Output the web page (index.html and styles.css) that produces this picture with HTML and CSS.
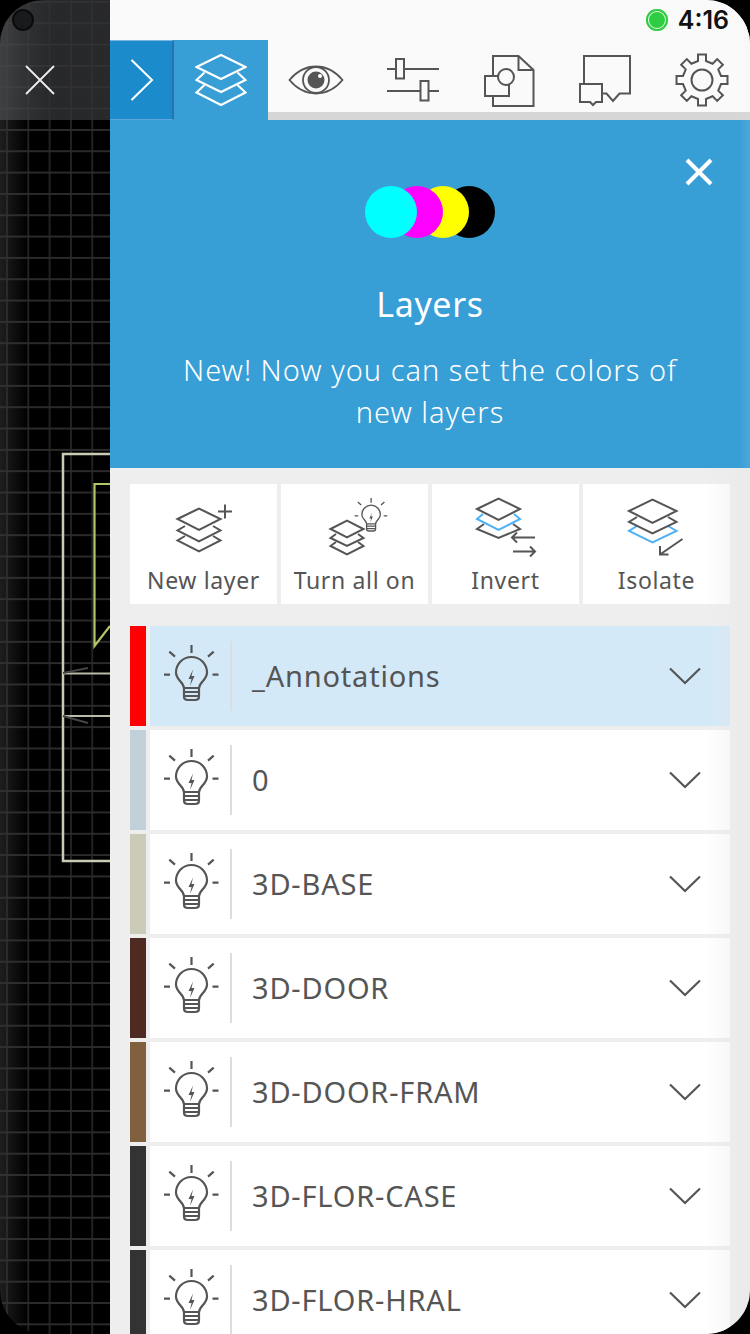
FILE: index.html
```html
<!DOCTYPE html>
<html lang="en">
<head>
<meta charset="utf-8">
<title>Layers</title>
<link rel="stylesheet" href="styles.css">
</head>
<body>
<svg class="defs" width="0" height="0" aria-hidden="true">
  <symbol id="bulb" viewBox="0 0 56 60">
    <g fill="none" stroke="#555" stroke-width="2.200">
      <path d="M28.500 0V8M6.300 6.700L12 11.700M50.700 6.700L45 11.700M1 29.700H7M49.500 29.700H55.500"/>
      <path d="M21 43C20.500 37 13 35 13 27.500A15.500 15.500 0 0 1 44 27.500C44 35 36.500 37 36 43"/>
      <path d="M21 43H36V51.500Q36 55 32 55H25Q21 55 21 51.500ZM21 47H36M21 51H36"/>
    </g>
    <path d="M30 24.500L25.500 34H28.500L27 41L31.500 31H28.500Z" fill="#555"/>
  </symbol>
  <symbol id="chevron" viewBox="0 0 34 18">
    <path d="M2 1.500L17 16L32 1.500" fill="none" stroke="#555" stroke-width="2.200"/>
  </symbol>
</svg>
<div class="device">
  <aside class="canvas">
    <div class="canvas-head">
      <span class="camera"></span>
      <svg class="canvas-close" viewBox="0 0 30 30" width="30" height="30"><path d="M1 1L29 29M29 1L1 29" stroke="#eee" stroke-width="1.800" fill="none"/></svg>
    </div>
    <svg class="drawing" viewBox="0 0 110 1334" width="110" height="1334">
      <path d="M110 454H63V861H110" fill="none" stroke="#c9cbb4" stroke-width="2.500"/>
      <path d="M63 673.500H110M63 716H110" fill="none" stroke="#b9baa8" stroke-width="1.800"/>
      <path d="M63 673L88 668M63 716L88 723" fill="none" stroke="#444" stroke-width="2.200"/>
      <path d="M110 484H94.500V646L110 626" fill="none" stroke="#b0c766" stroke-width="2.200"/>
    </svg>
  </aside>
  <main class="panel">
    <div class="status">
      <span class="dot"></span>
      <span class="time">4:16</span>
    </div>
    <nav class="tabs">
      <div class="tab-toggle">
        <svg viewBox="0 0 24 42" width="24" height="42"><path d="M1.500 1L22 21L1.500 41" fill="none" stroke="#fff" stroke-width="2"/></svg>
      </div>
      <div class="tab-active">
        <svg viewBox="194 53 52 54" width="52" height="54"><g fill="none" stroke="#fff" stroke-width="2.200"><path d="M195.500 67L220 55L244.500 67L220 79Z"/><path d="M203.500 72.500L195.500 80L220 92L244.500 80L236.500 72.500"/><path d="M203.500 85L195.500 92.500L220 105L244.500 92.500L236.500 85"/></g></svg>
      </div>
      <div class="tab">
        <svg viewBox="288 64 56 32" width="56" height="32"><path d="M289.500 80C297 71 306 66.500 316 66.500C326 66.500 335 71 342.500 80C335 89 326 93.500 316 93.500C306 93.500 297 89 289.500 80Z" fill="none" stroke="#555" stroke-width="1.800"/><circle cx="316" cy="80" r="13" fill="none" stroke="#555" stroke-width="1.800"/><circle cx="316" cy="80" r="8.500" fill="#555"/><circle cx="320" cy="76" r="2" fill="#fff"/></svg>
      </div>
      <div class="tab">
        <svg viewBox="386 59 54 46" width="54" height="46"><g fill="#fafafa" stroke="#555" stroke-width="2"><path d="M387 71H439M387 93H439"/><rect x="396" y="61" width="8" height="19.500"/><rect x="420.500" y="83" width="8" height="19.500"/></g></svg>
      </div>
      <div class="tab">
        <svg viewBox="484 53 52 53" width="52" height="53"><g fill="none" stroke="#555" stroke-width="2"><path d="M494 75V55H519.500L534.500 69V105H494V95"/><path d="M519.500 55V69H534.500"/><rect x="486" y="75" width="24" height="20"/><circle cx="507" cy="76" r="8" fill="#fafafa"/></g></svg>
      </div>
      <div class="tab">
        <svg viewBox="578 53 54 53" width="54" height="53"><g fill="none" stroke="#555" stroke-width="2"><path d="M584 82V55H630V92.500H619.500L613 100L606.500 92.500H603"/><path d="M580 83H602V101H596L593 104L590 101H580Z"/></g></svg>
      </div>
      <div class="tab">
        <svg viewBox="-27 -27 54 54" width="54" height="54"><g fill="none" stroke="#555" stroke-width="2"><path d="M-4 -19L-4 -25.500L4 -25.500L4 -19L10.600 -16.260L15.200 -20.860L20.860 -15.200L16.260 -10.600L19 -4L25.500 -4L25.500 4L19 4L16.260 10.600L20.860 15.200L15.200 20.860L10.600 16.260L4 19L4 25.500L-4 25.500L-4 19L-10.600 16.260L-15.200 20.860L-20.860 15.200L-16.260 10.600L-19 4L-25.500 4L-25.500 -4L-19 -4L-16.260 -10.600L-20.860 -15.200L-15.200 -20.860L-10.600 -16.260Z"/><circle r="10.500"/></g></svg>
      </div>
    </nav>
    <header class="intro">
      <svg class="intro-close" viewBox="0 0 30 30" width="30" height="30"><path d="M3 3L27 27M27 3L3 27" stroke="#fff" stroke-width="4" fill="none"/></svg>
      <div class="inks">
        <span class="ink ink-c"></span>
        <span class="ink ink-m"></span>
        <span class="ink ink-y"></span>
        <span class="ink ink-k"></span>
      </div>
      <h1 class="intro-title">Layers</h1>
      <p class="intro-text">New! Now you can set the colors of<br>new layers</p>
    </header>
    <section class="content">
      <div class="tools">
        <div class="tool">
          <svg class="tool-icon" viewBox="130 484 147 76" width="147" height="76"><g fill="none" stroke="#555" stroke-width="2"><path d="M177.500 519L199 508.500L220.500 519L199 530Z"/><path d="M185 526L177.500 530.500L199 541.500L220.500 530.500L213 526"/><path d="M185 536L177.500 540.500L199 551.500L220.500 540.500L213 536"/><path d="M225 504.500V518.500M218 511.500H232"/></g></svg>
          <span class="tool-label">New layer</span>
        </div>
        <div class="tool">
          <svg class="tool-icon" viewBox="281 484 147 76" width="147" height="76"><g fill="none" stroke="#555" stroke-width="2"><path d="M330.500 529L347 520.500L363.500 529L347 537.500Z"/><path d="M336 534L330.500 538L347 546L363.500 538L358 534"/><path d="M336 542L330.500 546L347 554.500L363.500 546L358 542"/></g><use href="#bulb" x="354" y="498" width="33.600" height="36"/></svg>
          <span class="tool-label">Turn all on</span>
        </div>
        <div class="tool">
          <svg class="tool-icon" viewBox="432 484 147 76" width="147" height="76"><g fill="none" stroke-width="2"><path d="M484 524L477 529L498.500 538L520 529L513 524" stroke="#555"/><path d="M483 514L477 519L498.500 530L520 519L514 514" stroke="#4db1f5"/><path d="M477 509L498.500 498.500L520 509L498.500 520Z" stroke="#555" fill="#fff"/><path d="M535 537.500H512M517 532.500L512 537.500L517 542.500M513 551.500H535M530 546.500L535 551.500L530 556.500" stroke="#555"/></g></svg>
          <span class="tool-label">Invert</span>
        </div>
        <div class="tool">
          <svg class="tool-icon" viewBox="583 484 147 76" width="147" height="76"><g fill="none" stroke-width="2"><path d="M637 526L629 531L652.500 542.500L676.500 531L668 526" stroke="#4db1f5"/><path d="M637 517L629 522L652.500 533.500L676.500 522L668 517" stroke="#555"/><path d="M629 511L652.500 499.500L676.500 511L652.500 523Z" stroke="#555" fill="#fff"/><path d="M682.500 539L660 554.500M660 546V554.500H668.500" stroke="#555"/></g></svg>
          <span class="tool-label">Isolate</span>
        </div>
      </div>
      <ul class="layers">
        <li class="layer layer-on"><span class="swatch sw-red"></span><div class="layer-body"><svg class="bulb"><use href="#bulb"/></svg><span class="rule"></span><span class="layer-name">_Annotations</span><svg class="chev"><use href="#chevron"/></svg></div></li>
        <li class="layer"><span class="swatch sw-zero"></span><div class="layer-body"><svg class="bulb"><use href="#bulb"/></svg><span class="rule"></span><span class="layer-name">0</span><svg class="chev"><use href="#chevron"/></svg></div></li>
        <li class="layer"><span class="swatch sw-base"></span><div class="layer-body"><svg class="bulb"><use href="#bulb"/></svg><span class="rule"></span><span class="layer-name">3D-BASE</span><svg class="chev"><use href="#chevron"/></svg></div></li>
        <li class="layer"><span class="swatch sw-door"></span><div class="layer-body"><svg class="bulb"><use href="#bulb"/></svg><span class="rule"></span><span class="layer-name">3D-DOOR</span><svg class="chev"><use href="#chevron"/></svg></div></li>
        <li class="layer"><span class="swatch sw-fram"></span><div class="layer-body"><svg class="bulb"><use href="#bulb"/></svg><span class="rule"></span><span class="layer-name">3D-DOOR-FRAM</span><svg class="chev"><use href="#chevron"/></svg></div></li>
        <li class="layer"><span class="swatch sw-dark"></span><div class="layer-body"><svg class="bulb"><use href="#bulb"/></svg><span class="rule"></span><span class="layer-name">3D-FLOR-CASE</span><svg class="chev"><use href="#chevron"/></svg></div></li>
        <li class="layer"><span class="swatch sw-dark"></span><div class="layer-body"><svg class="bulb"><use href="#bulb"/></svg><span class="rule"></span><span class="layer-name">3D-FLOR-HRAL</span><svg class="chev"><use href="#chevron"/></svg></div></li>
      </ul>
    </section>
    <div class="edge-shade"></div>
  </main>
</div>
</body>
</html>
```
FILE: styles.css
```css
* { box-sizing: border-box; }
html, body { margin: 0; padding: 0; background: #000; }
body { width: 750px; height: 1334px; overflow: hidden; font-family: "Noto Sans", "Open Sans", sans-serif; color: #555; }
.defs { position: absolute; }
.device { width: 750px; height: 1334px; display: flex; overflow: hidden; border-radius: 44px; background: #000; }

.canvas {
  position: relative; width: 110px; flex: none;
  background-color: #000;
  background-image:
    linear-gradient(to right, rgba(55,55,55,.55), rgba(0,0,0,0) 28px),
    linear-gradient(#2b2b2b 2px, transparent 2px),
    linear-gradient(to right, #222 2px, transparent 2px);
  background-size: auto, 21.33px 21.33px, 21.33px 21.33px;
  background-position: 0 0, 0 1px, 6px 0;
}
.canvas-head {
  position: relative; height: 120px; display: flex; align-items: center; justify-content: center;
  padding-top: 40px; padding-right: 30px;
  background: linear-gradient(to right, rgba(72,73,76,.8), rgba(50,51,54,.8) 45%);
}
.camera { position: absolute; left: 12px; top: 9px; width: 22px; height: 22px; border-radius: 50%; background: #191a1b; border: 2px solid #0b0b0c; }
.drawing { position: absolute; left: 0; top: 0; }

.panel { position: relative; flex: 1; min-width: 0; display: flex; flex-direction: column; background: #eee; }
.status { height: 40px; flex: none; display: flex; align-items: center; justify-content: flex-end; gap: 10px; padding-right: 21px; background: #fafafa; }
.dot { width: 22px; height: 22px; border-radius: 50%; background: #2ecc40; box-shadow: inset 0 0 0 2px #2ecc40, inset 0 0 0 3px #e8f8ea; }
.time { font-family: Inter, "Liberation Sans", sans-serif; font-size: 25px; font-weight: 600; line-height: 40px; color: #111; }

.tabs { height: 80px; flex: none; display: flex; background: linear-gradient(#fafafa 72px, #d6d6d6 72px); }
.tab-toggle { width: 64px; flex: none; display: flex; align-items: center; justify-content: center; padding-left: 2px; background: #1b8bcb; border-top: 1px solid #7fb5e0; border-bottom: 1px solid #5fa5dc; border-right: 2px solid #2a72ad; }
.tab-active { width: 94px; flex: none; display: flex; align-items: center; justify-content: center; background: #389ed6; }
.tab { flex: 1; min-width: 0; display: flex; align-items: center; justify-content: center; padding-bottom: 0; }

.intro { position: relative; height: 348px; flex: none; display: flex; flex-direction: column; align-items: center; padding-top: 66px; background: #389ed6; color: #fff; }
.intro-close { position: absolute; right: 36px; top: 37px; }
.inks { display: flex; }
.ink { width: 52px; height: 52px; border-radius: 50%; margin-left: -26px; }
.ink:first-child { margin-left: 0; }
.ink-c { background: #0ff; z-index: 4; }
.ink-m { background: #f0f; z-index: 3; }
.ink-y { background: #ff0; z-index: 2; }
.ink-k { background: #000; z-index: 1; }
.intro-title { margin: 43px 0 0; font-size: 34px; font-weight: 400; line-height: 46px; letter-spacing: .6px; }
.intro-text { margin: 22px 0 0; font-size: 29px; font-weight: 300; line-height: 42px; letter-spacing: 1px; text-align: center; }

.content { position: relative; flex: 1; min-height: 0; overflow: hidden; padding: 16px 20px 0; }
.content::after { content: ""; position: absolute; right: 0; top: 0; bottom: 0; width: 45px; background: linear-gradient(to right, rgba(232,232,232,0), rgba(232,232,232,.55)); }
.tools { display: flex; gap: 4px; }
.tool { flex: 1; height: 120px; display: flex; flex-direction: column; align-items: center; background: #fff; }
.tool-icon { flex: none; display: block; }
.tool-label { font-size: 23px; line-height: 41px; letter-spacing: .65px; color: #555; white-space: nowrap; }

.layers { list-style: none; margin: 22px 0 0; padding: 0; display: flex; flex-direction: column; gap: 4px; }
.layer { height: 100px; flex: none; display: flex; gap: 4px; }
.swatch { width: 16px; flex: none; }
.sw-red { background: #f00; }
.sw-zero { background: #c2d0da; }
.sw-base { background: #cbcbb7; }
.sw-door { background: #4f2a20; }
.sw-fram { background: #80603f; }
.sw-dark { background: #333; }
.layer-body { flex: 1; min-width: 0; display: flex; align-items: center; padding: 0 28px 0 13px; background: #fff; }
.layer-on .layer-body { background: #d3e9f8; }
.bulb { width: 56px; height: 60px; flex: none; margin-top: -2px; }
.rule { width: 2px; height: 70px; flex: none; margin-left: 11px; background: #ddd; }
.layer-name { flex: 1; min-width: 0; margin-left: 20px; font-size: 29px; line-height: 40px; letter-spacing: .8px; color: #555; white-space: nowrap; }
.chev { width: 34px; height: 18px; flex: none; }

.edge-shade { position: absolute; right: 0; top: 0; bottom: 0; width: 12px; pointer-events: none; background: linear-gradient(to right, rgba(232,232,232,0), rgba(232,232,232,.12)); }
```
